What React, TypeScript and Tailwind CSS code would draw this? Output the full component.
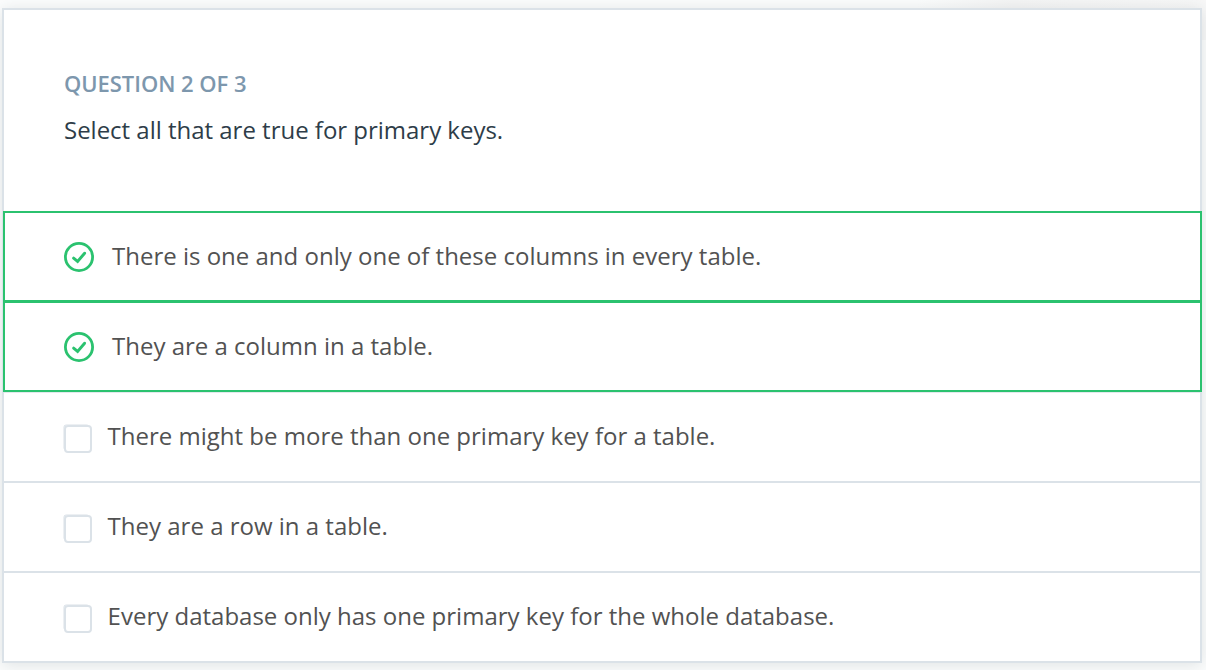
const correct = [
  { text: 'There is one and only one of these columns in every table.', box: 'h-[92px] border-t-2 border-b-[3px]' },
  { text: 'They are a column in a table.', box: 'h-[89px] border-b-2' },
];

const others = [
  { text: 'There might be more than one primary key for a table.', box: 'h-[91px] border-t border-b-2 border-t-[#e3e8ed]' },
  { text: 'They are a row in a table.', box: 'h-[90px] border-b-2' },
  { text: 'Every database only has one primary key for the whole database.', box: 'h-[88px]' },
];

function CheckCircle() {
  return (
    <svg className="mt-px size-[30px] shrink-0" viewBox="0 0 30 30" fill="none" stroke="#2bc26f">
      <circle cx="15" cy="15" r="13.6" strokeWidth="2.8" />
      <path d="M9.6 16.1 13.6 19.4 20.6 11.2" strokeWidth="2.9" strokeLinecap="round" />
    </svg>
  );
}

export default function App() {
  return (
    <div className="h-[670px] w-[1206px] overflow-hidden bg-[#fcfdfd] bg-[linear-gradient(to_right,transparent_76%,#f5f5f5_84%,#f8f8f8)] bg-[length:100%_40px] bg-no-repeat pt-2 pl-0.5 font-['Open_Sans',sans-serif]">
      <main className="h-[655px] w-[1200px] border-2 border-[#dbe2e8] bg-white shadow-[0_2px_16px_rgba(46,61,73,0.14)]">
        <header className="h-[201px] pt-[57px] pl-[60px]">
          <h1 className="text-[22px] leading-8 font-semibold tracking-[-0.04px] whitespace-nowrap text-[#7d97ad]">QUESTION 2 OF 3</h1>
          <p className="mt-[15px] text-[24px] leading-8 tracking-[-0.015px] whitespace-nowrap text-[#2e3d49]">Select all that are true for primary keys.</p>
        </header>
        <ul>
          {correct.map(({ text, box }) => (
            <li key={text} className={`-mr-0.5 -ml-px flex items-center gap-[18px] border-x-2 border-[#2bc26f] pl-[59px] text-[24px] text-[#525252] ${box}`}>
              <CheckCircle />
              <span className="mb-0.5 whitespace-nowrap">{text}</span>
            </li>
          ))}
          {others.map(({ text, box }) => (
            <li key={text} className={`flex items-center gap-4 border-[#dbe2e8] pl-[60px] text-[24px] text-[#525252] ${box}`}>
              <span className="mt-[3px] size-7 shrink-0 rounded-[4px] border-2 border-[#dbe2e8] shadow-[-1.5px_-1.5px_0_-1px_#dbe2e8]" />
              <span className="mb-0.5 -ml-[0.4px] whitespace-nowrap">{text}</span>
            </li>
          ))}
        </ul>
      </main>
    </div>
  );
}
